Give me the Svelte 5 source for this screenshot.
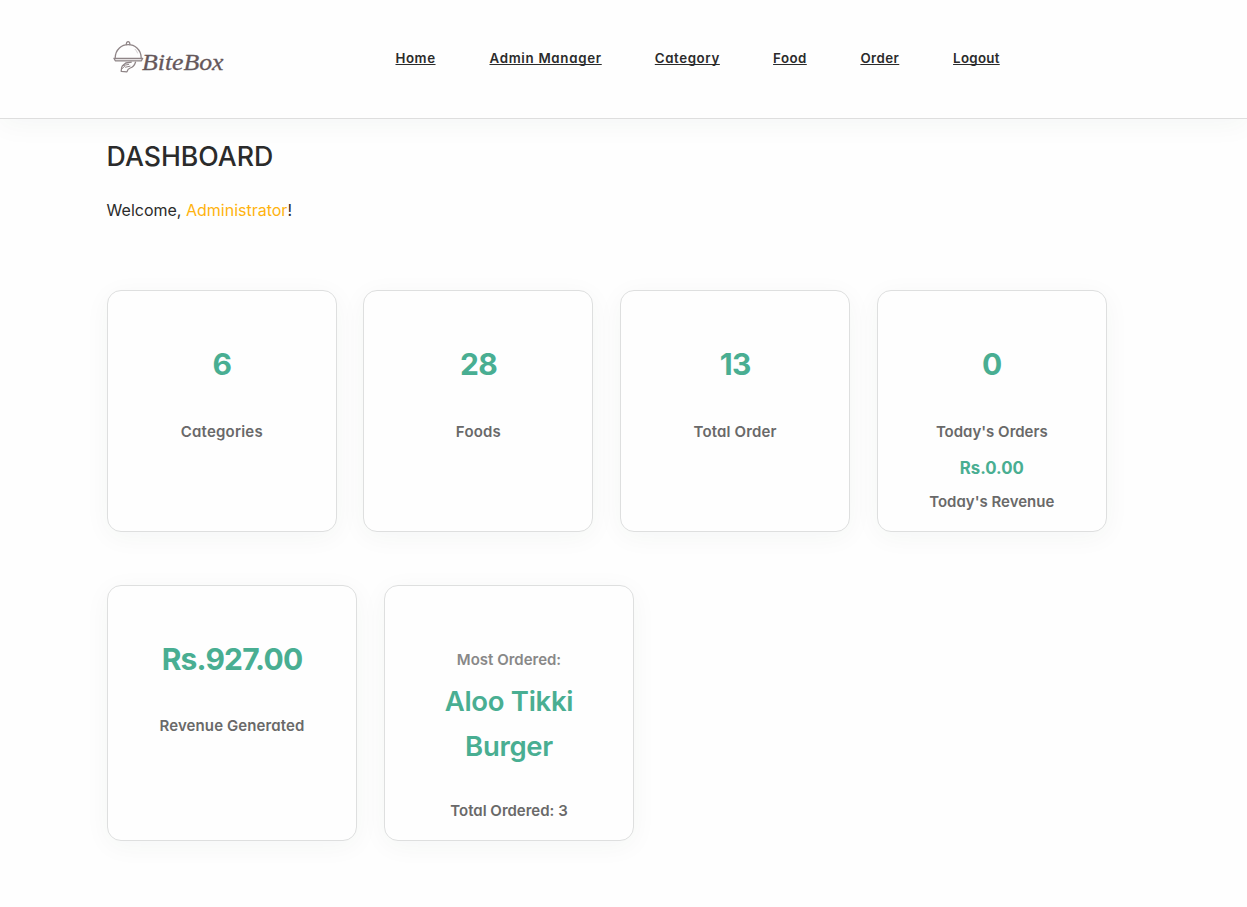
<script>
  const links = [
    { label: 'Home', width: 40.7, spacing: 0.55 },
    { label: 'Admin Manager', width: 112, spacing: 0.7 },
    { label: 'Category', width: 65, spacing: 0.6 },
    { label: 'Food', width: 34, spacing: 0.45 },
    { label: 'Order', width: 39.4, spacing: 0.45 },
    { label: 'Logout', width: 47.4, spacing: 0.3 }
  ];
  const stats = [
    { value: '6', label: 'Categories', spacing: 0.2 },
    { value: '28', label: 'Foods', spacing: 0.2 },
    { value: '13', label: 'Total Order', spacing: 0.15 },
    { value: '0', label: "Today's Orders", spacing: 0, revenue: 'Rs.0.00' }
  ];
</script>

<header>
  <svg class="logo" viewBox="0 0 118 40" width="118" height="40" role="img" aria-label="BiteBox">
    <g fill="none" stroke="#8f8587" stroke-width="1.3" stroke-linecap="round" stroke-linejoin="round">
      <path d="M19.4 7.5c-.5-3.8 3.9-3.8 3.4 0" />
      <path d="M8.2 20.8C8.8 3.3 33.6 3.3 34.2 20.8" />
      <path d="M28 12.2c1.2 1.1 2 2.3 2.5 3.8" stroke="#c8c2c4" stroke-width="0.8" />
      <path d="M6.9 21.3h28.8l-1.3 2.5H8.3Z" fill="#e4e0e1" />
      <path d="M28.5 25.2c-1.1 3.5-3 5.1-5.3 5.8-2 .7-2.7 1.6-3.3 3.9l-5.7-.5c.2-2.2.1-4.2 1.3-5.7l3.3-2.7 5.5-.8" />
      <path d="M16.2 28.5l5.5-1.1M18.5 30.2l4.5-1M14.6 32.1l3-2.8" stroke-width="1" />
    </g>
    <text x="35" y="32.8" textLength="81.5" lengthAdjust="spacingAndGlyphs">BiteBox</text>
  </svg>
  <nav>
    {#each links as link}
      <a href="#top" style="width:{link.width}px; letter-spacing:{link.spacing}px">{link.label}</a>
    {/each}
  </nav>
</header>

<main>
  <h1>DASHBOARD</h1>
  <p class="welcome">Welcome, <span>Administrator</span>!</p>
  <section class="stats">
    {#each stats as stat}
      <article class="card">
        <strong class="value">{stat.value}</strong>
        <span class="label" style="letter-spacing:{stat.spacing}px">{stat.label}</span>
        {#if stat.revenue}
          <strong class="revenue">{stat.revenue}</strong>
          <span class="label">Today's Revenue</span>
        {/if}
      </article>
    {/each}
  </section>
  <section class="summary">
    <article class="card">
      <strong class="value total">Rs.927.00</strong>
      <span class="label generated">Revenue Generated</span>
    </article>
    <article class="card">
      <span class="label muted">Most Ordered:</span>
      <strong class="dish">Aloo Tikki<br />Burger</strong>
      <span class="label count">Total Ordered: 3</span>
    </article>
  </section>
</main>

<style>
  :global(body) {
    background: #fefefe;
    color: #2b2b2b;
    font-family: Inter, sans-serif;
  }
  header {
    box-sizing: border-box;
    height: 119px;
    padding: 0 107px;
    display: flex;
    align-items: center;
    background: #fefefe;
    border-bottom: 1px solid #dedede;
    box-shadow: 0 5px 27px rgba(30, 60, 50, 0.045);
  }
  .logo { flex: none; display: block; margin-bottom: 4px; }
  .logo text {
    font: italic 400 24px "Liberation Serif", serif;
    fill: #65575a;
    stroke: #65575a;
    stroke-width: 0.3px;
  }
  nav {
    display: flex;
    gap: 53.3px;
    margin: 0 0 2px 170.5px;
  }
  a {
    color: #2b2b2b;
    font-size: 13.3px;
    line-height: 20px;
    font-weight: 600;
    font-feature-settings: "cv11";
    white-space: nowrap;
    text-underline-offset: 1px;
    text-decoration-thickness: 1px;
    text-decoration-skip-ink: none;
  }
  main { padding: 0 107px 60px; }
  h1 {
    margin: 0 0 0 -0.4px;
    padding-top: 19px;
    font-size: 26.7px;
    line-height: 36px;
    font-weight: 500;
  }
  .welcome {
    margin: 23px 0 0 -0.4px;
    font-size: 16px;
    line-height: 27px;
  }
  .welcome span { color: #ffb30e; }
  .stats {
    display: grid;
    grid-template-columns: repeat(4, 230px);
    grid-auto-rows: 242px;
    gap: 26.67px;
    margin-top: 66px;
    margin-left: -0.2px;
  }
  .summary {
    display: grid;
    grid-template-columns: repeat(2, 250px);
    grid-auto-rows: 256px;
    gap: 27px;
    margin-top: 53px;
  }
  .card {
    box-sizing: border-box;
    display: flex;
    flex-direction: column;
    align-items: center;
    padding-top: 50px;
    background: #fefefe;
    border: 1px solid #dedfdf;
    border-radius: 14px;
    box-shadow: 0 5px 27px rgba(30, 60, 50, 0.045);
    text-align: center;
    font-feature-settings: "cv11";
  }
  .value {
    color: #49ae92;
    font-size: 30px;
    line-height: 46px;
    font-weight: 650;
    letter-spacing: -0.8px;
  }
  .label {
    margin-top: 33px;
    color: #696969;
    font-size: 15px;
    line-height: 24px;
    font-weight: 600;
    letter-spacing: 0;
    white-space: nowrap;
  }
  .total + .label { margin-top: 32px; }
  .generated { letter-spacing: 0.1px; }
  .revenue {
    margin-top: 12px;
    color: #49ae92;
    font-size: 16.8px;
    line-height: 24px;
    font-weight: 650;
  }
  .revenue + .label { margin-top: 10px; }
  .muted { margin-top: 12px; color: #888; }
  .dish {
    margin-top: 7px;
    color: #49ae92;
    font-size: 27.5px;
    line-height: 45px;
    font-weight: 640;
    letter-spacing: -0.3px;
  }
  .count { margin-top: 30px; }
</style>
